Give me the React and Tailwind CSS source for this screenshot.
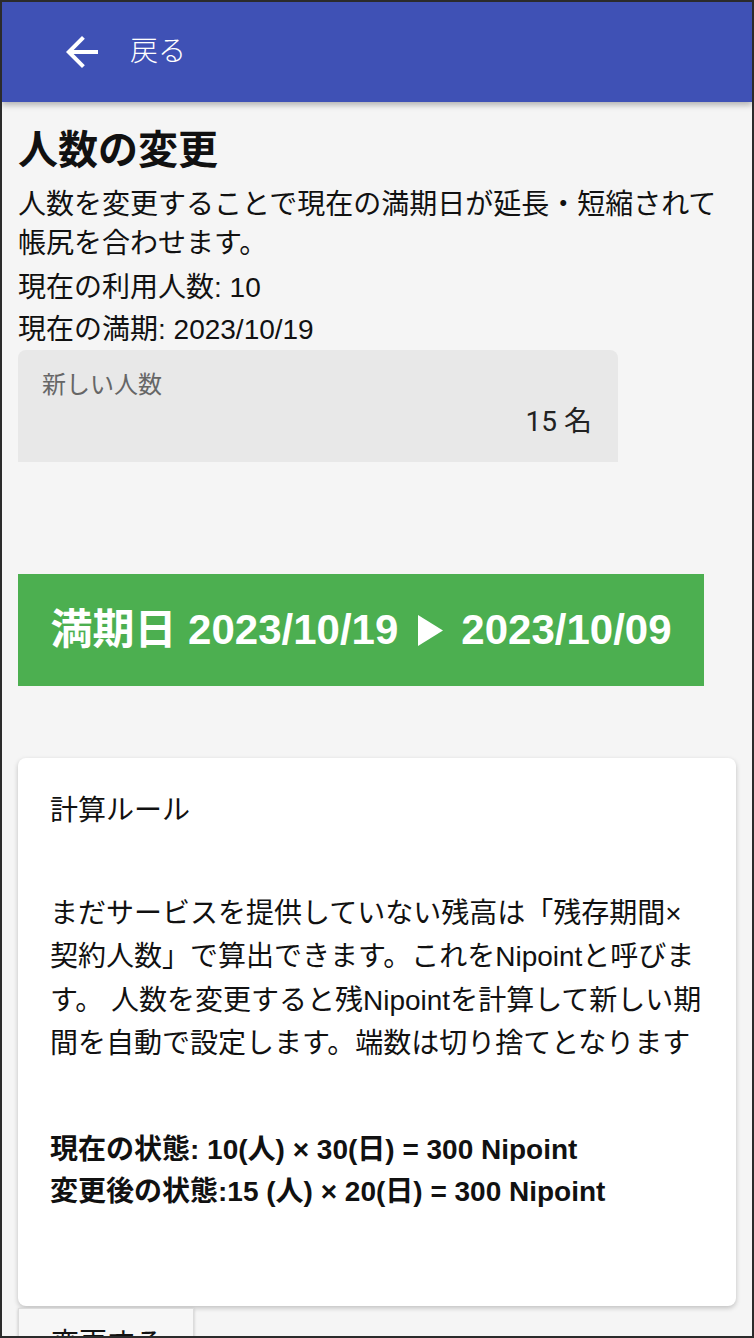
import React from 'react';

const BackArrow = () => (
    <svg width="48" height="48" viewBox="0 0 24 24" fill="currentColor">
        <path d="M20 11H7.83l5.59-5.59L12 4l-8 8 8 8 1.41-1.41L7.83 13H20v-2z" />
    </svg>
);

const App = () => {
    return (
        <div className="w-[754px] h-[1338px] border-2 border-[#2b2b2b] bg-[#f5f5f5] overflow-hidden font-['Liberation_Sans','Noto_Sans_CJK_JP',sans-serif] text-[#111]">
            {/* App bar */}
            <header className="relative z-10 h-[100px] bg-[#3f51b5] text-white flex items-center pl-[56px] shadow-[0_3px_6px_rgba(0,0,0,0.28)]">
                <BackArrow />
                <span className="ml-6 text-[28px] leading-[40px] font-light">戻る</span>
            </header>

            <main className="px-4">
                <h1 className="pt-6 text-[40px] leading-[48px] font-bold">人数の変更</h1>

                <div className="mt-[11px] text-[28px]">
                    <p className="leading-[39px]">人数を変更することで現在の満期日が延長・短縮されて帳尻を合わせます。</p>
                    <p className="mt-1 leading-[42px]">現在の利用人数: 10</p>
                    <p className="leading-[41px]">現在の満期: 2023/10/19</p>
                </div>

                {/* New member count field */}
                <div className="w-[600px] h-[112px] rounded-t-lg bg-[#e8e8e8] pl-6 pr-[26px] pt-5 font-['Roboto','Noto_Sans_CJK_JP',sans-serif]">
                    <div className="text-[24px] leading-[30px] text-[#666]">新しい人数</div>
                    <div className="mt-1 text-right text-[28px] leading-[36px] text-[#222]">15 名</div>
                </div>

                {/* Expiry change banner */}
                <div className="mt-[112px] w-[686px] h-[112px] bg-[#4caf50] text-white flex items-center justify-center text-[42px] leading-[48px] font-bold">
                    <span>満期日 2023/10/19</span>
                    <svg className="ml-[20px] mr-[18px]" width="25" height="31" viewBox="0 0 25 31" fill="currentColor">
                        <path d="M0 0L25 15.5L0 31Z" />
                    </svg>
                    <span>2023/10/09</span>
                </div>

                {/* Calculation rule card */}
                <section className="mt-[72px] h-[548px] rounded-lg bg-white pl-8 pr-6 pt-8 shadow-[0_2px_5px_rgba(0,0,0,0.22)]">
                    <h2 className="text-[28px] leading-[42px]">計算ルール</h2>
                    <p className="mt-[60px] text-[28px] leading-[43.3px]">
                        まだサービスを提供していない残高は「残存期間×<br />
                        契約人数」で算出できます。これをNipointと呼びま<br />
                        す。 人数を変更すると残Nipointを計算して新しい期<br />
                        間を自動で設定します。端数は切り捨てとなります
                    </p>
                    <div className="mt-[64px] text-[28px] leading-[42px] font-bold">
                        <p>現在の状態: 10(人) × 30(日) = 300 Nipoint</p>
                        <p>変更後の状態:15 (人) × 20(日) = 300 Nipoint</p>
                    </div>
                </section>

                <button className="mt-[2px] w-[176px] h-[70px] border border-[#dcdcdc] bg-[#f7f7f7] shadow-[0_1px_3px_rgba(0,0,0,0.2)] text-left pl-8 pt-[14px] text-[28px] leading-[42px] flex items-start">
                    変更する
                </button>
            </main>
        </div>
    );
};

export default App;
